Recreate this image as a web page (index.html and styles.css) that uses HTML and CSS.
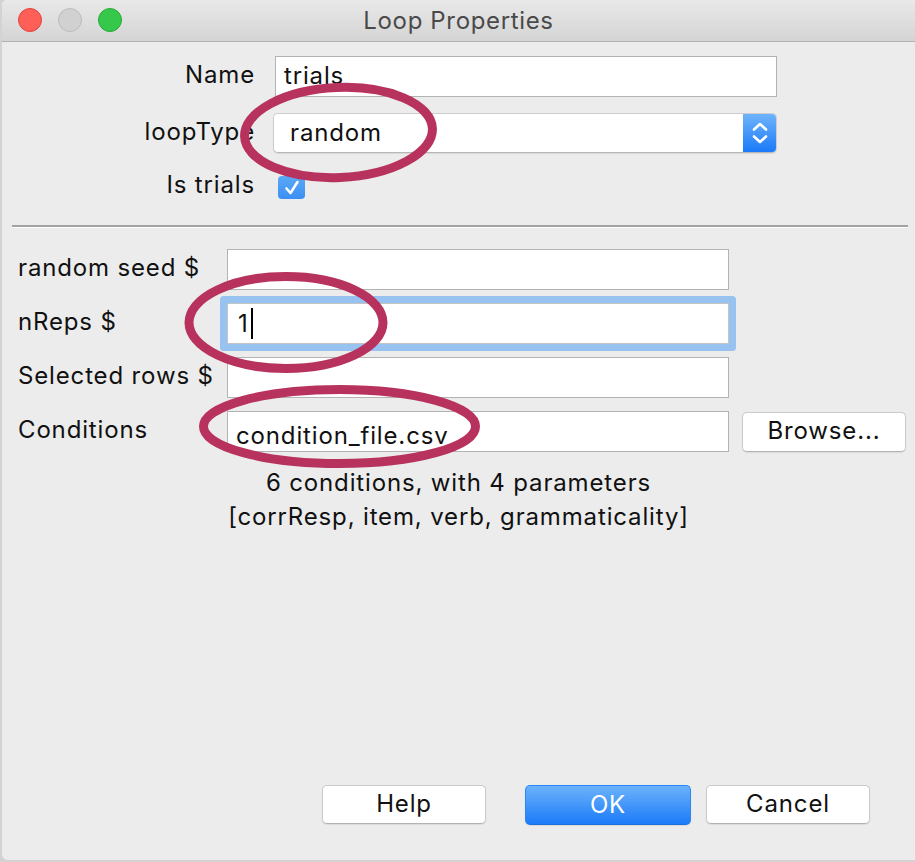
FILE: index.html
```html
<!DOCTYPE html>
<html>
<head>
<meta charset="utf-8">
<title>Loop Properties</title>
<link rel="stylesheet" href="styles.css">
</head>
<body>
<div class="window">
  <header class="titlebar">
    <div class="lights">
      <span class="light red"></span>
      <span class="light gray"></span>
      <span class="light green"></span>
    </div>
    <div class="title">Loop Properties</div>
    <div></div>
  </header>

  <section class="top-form">
    <span class="tlabel">Name</span>
    <div class="textfield name-field">trials</div>

    <span class="tlabel">loopType</span>
    <div class="select">
      <span class="select-value">random</span>
      <span class="stepper">
        <svg width="18" height="24" viewBox="0 0 18 24"><path d="M3 8.5 L9 3 L15 8.5 M3 15.5 L9 21 L15 15.5" fill="none" stroke="#fff" stroke-width="2.6" stroke-linecap="round" stroke-linejoin="round"/></svg>
      </span>
    </div>

    <span class="tlabel check-label">Is trials</span>
    <div class="check-cell">
      <span class="checkbox">
        <svg width="22" height="22" viewBox="0 0 22 22"><path d="M5.5 11.5 L9.5 16 L16.5 5" fill="none" stroke="#fff" stroke-width="2.6" stroke-linecap="round" stroke-linejoin="round"/></svg>
      </span>
    </div>
  </section>

  <div class="separator"></div>

  <section class="bottom-form">
    <span class="blabel">random seed $</span>
    <div class="textfield"></div>
    <div></div>

    <span class="blabel">nReps $</span>
    <div class="textfield focused"><span>1</span><span class="caret"></span></div>
    <div></div>

    <span class="blabel">Selected rows $</span>
    <div class="textfield"></div>
    <div></div>

    <span class="blabel">Conditions</span>
    <div class="textfield cond-field">condition_file.csv</div>
    <button class="btn browse">Browse...</button>
  </section>

  <div class="info">
    <div>6 conditions, with 4 parameters</div>
    <div>[corrResp, item, verb, grammaticality]</div>
  </div>

  <footer class="buttons">
    <button class="btn help">Help</button>
    <button class="btn primary">OK</button>
    <button class="btn">Cancel</button>
  </footer>

  <svg class="annotations" width="913" height="862" viewBox="2 0 913 862">
    <g fill="none" stroke="#b8325e" stroke-width="9">
      <ellipse cx="338.5" cy="132.5" rx="94" ry="45" transform="rotate(-2.5 338.5 132.5)"/>
      <ellipse cx="286" cy="322.5" rx="97" ry="46"/>
      <ellipse cx="339.5" cy="426.5" rx="136" ry="37"/>
    </g>
  </svg>
</div>
</body>
</html>
```

FILE: styles.css
```css
* { box-sizing: border-box; }

html, body {
  margin: 0;
  padding: 0;
  height: 862px;
  overflow: hidden;
}

body {
  background: #d3d3d3;
  padding-left: 2px;
  font-family: "Inter", "Liberation Sans", sans-serif;
  color: #111;
}

.window {
  position: relative;
  width: 913px;
  height: 860px;
  background: #ececec;
  border-radius: 5px 0 0 6px;
  display: flex;
  flex-direction: column;
  overflow: hidden;
  font-size: 24px;
  letter-spacing: 0.85px;
}

.titlebar {
  height: 42px;
  flex: none;
  display: grid;
  grid-template-columns: 1fr auto 1fr;
  align-items: center;
  background: linear-gradient(#e9e9e9, #d4d4d4);
  border-bottom: 1px solid #b1b1b1;
}

.lights {
  display: flex;
  gap: 16px;
  padding-left: 16px;
  padding-bottom: 1px;
}

.light {
  width: 24px;
  height: 24px;
  border-radius: 50%;
  display: block;
}
.light.red { background: #fe5f57; border: 1px solid #e0443e; }
.light.gray { background: #d1d1d1; border: 1px solid #bcbcbc; }
.light.green { background: #35c84a; border: 1px solid #27aa35; }

.title {
  font-size: 24px;
  letter-spacing: 0.65px;
  color: #4a4a4a;
  padding-bottom: 1px;
}

.top-form {
  display: grid;
  grid-template-columns: 253px 502px;
  grid-template-rows: 41px 40px 30px;
  column-gap: 20px;
  row-gap: 16px;
  padding-top: 14px;
  align-items: center;
  flex: none;
}

.tlabel {
  text-align: right;
  padding-bottom: 4px;
}

.check-label {
  align-self: end;
  padding-bottom: 0;
  line-height: 28px;
}

.textfield {
  height: 41px;
  background: #fff;
  border: 1px solid #b3b3b3;
  padding: 0 8px;
  display: flex;
  align-items: center;
  color: #111;
}

.name-field {
  padding-bottom: 2px;
}

.select {
  height: 40px;
  margin-left: -2px;
  display: flex;
  background: #fff;
  border: 1px solid #cdcdcd;
  border-bottom-color: #b7b7b7;
  border-radius: 5px;
  box-shadow: 0 1px 1px rgba(0,0,0,0.08);
  overflow: hidden;
}

.select-value {
  flex: 1;
  padding-left: 16px;
  display: flex;
  align-items: center;
  padding-bottom: 2px;
}

.stepper {
  width: 33px;
  background: linear-gradient(#6fb3fb, #1a7af8);
  display: flex;
  align-items: center;
  justify-content: center;
}

.check-cell {
  align-self: end;
  height: 23px;
  display: flex;
  align-items: center;
}

.checkbox {
  width: 27px;
  height: 23px;
  margin-left: 3px;
  border-radius: 4px;
  background: linear-gradient(#5aa8f7, #3b8ff2);
  display: flex;
  align-items: center;
  justify-content: center;
}

.separator {
  margin: 26px 7px 0 10px;
  height: 3px;
  border-top: 2px solid #a3a3a3;
  border-bottom: 1px solid #ffffff;
  flex: none;
}

.bottom-form {
  display: grid;
  grid-template-columns: 196px 502px 164px;
  grid-auto-rows: 41px;
  column-gap: 13px;
  row-gap: 13px;
  padding-left: 16px;
  margin-top: 21px;
  align-items: center;
  flex: none;
}

.blabel {
  padding-bottom: 5px;
  white-space: nowrap;
}

.focused {
  box-shadow: 0 0 0 7px #98c2f0;
  border-radius: 1px;
  border-color: #c4c4c4;
  padding-left: 10px;
}

.caret {
  width: 2px;
  height: 31px;
  background: #000;
  margin-left: 2px;
}

.cond-field {
  padding-top: 8px;
}

.btn {
  font-family: inherit;
  font-size: 24px;
  letter-spacing: 0.85px;
  height: 39px;
  background: #fff;
  border: 1px solid #c9c9c9;
  border-bottom-color: #b3b3b3;
  border-radius: 5px;
  box-shadow: 0 1px 1px rgba(0,0,0,0.08);
  color: #111;
  padding: 0 0 2px;
  cursor: default;
}

.browse {
  width: 164px;
  height: 40px;
}

.info {
  margin-top: 14px;
  text-align: center;
  line-height: 34px;
  flex: none;
}

.buttons {
  margin-top: auto;
  display: flex;
  justify-content: flex-end;
  gap: 15px;
  padding-right: 45px;
  padding-bottom: 35px;
}

.buttons .btn {
  width: 164px;
}

.buttons .help {
  margin-right: 24px;
}

.buttons .primary {
  width: 166px;
  height: 40px;
  color: #fff;
  background: linear-gradient(#6cb2fb, #1b7bf8);
  border: 1px solid #2a86f6;
  border-bottom-color: #1a6fe0;
}

.annotations {
  position: absolute;
  left: 0;
  top: 0;
  pointer-events: none;
}
```
